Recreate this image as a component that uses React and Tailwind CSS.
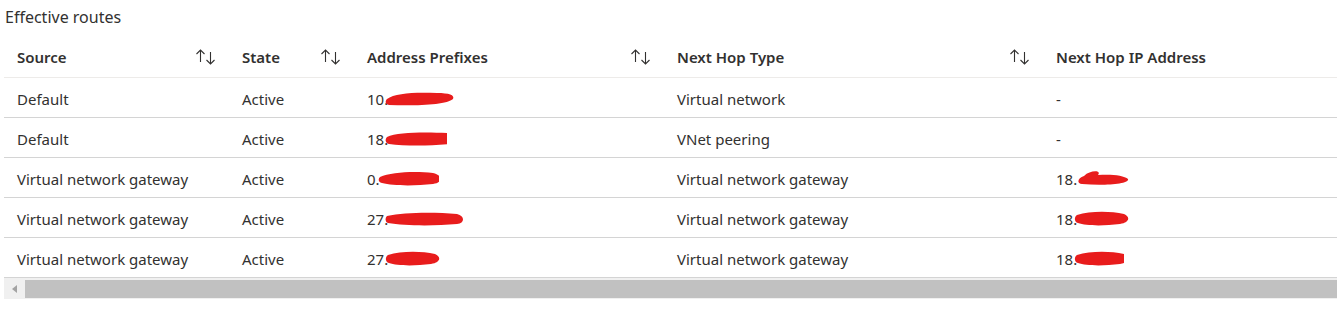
const columns = [
  { label: 'Source', width: 'w-[225px]', sortable: true },
  { label: 'State', width: 'w-[125px]', sortable: true },
  { label: 'Address Prefixes', width: 'w-[310px]', sortable: true },
  { label: 'Next Hop Type', width: 'w-[379px]', sortable: true },
  { label: 'Next Hop IP Address', width: 'flex-1', sortable: false },
]

// scribble shapes covering the redacted part of each address
const scribbles = {
  a: 'M2 8 C10 2, 30 1, 52 2 C64 2, 70 4, 68 8 C62 14, 30 15, 4 14 C0 13, 0 10, 2 8 Z',
  b: 'M2 6 C12 1, 40 1, 62 2 C72 3, 72 11, 64 13 C44 15, 20 15, 4 13 C0 12, 0 8, 2 6 Z',
  c: 'M3 6 C14 1, 38 0, 56 2 C66 4, 66 12, 56 13 C38 15, 16 15, 5 12 C1 11, 1 8, 3 6 Z',
  d: 'M2 5 C20 1, 50 1, 72 3 C80 5, 80 12, 72 13 C50 15, 20 15, 3 12 C0 11, 0 7, 2 5 Z',
  e: 'M10 5 C16 -1, 28 -1, 24 4 C36 3, 50 4, 54 8 C56 13, 30 15, 8 13 C2 12, 4 7, 10 5 Z',
  f: 'M3 4 C16 0, 36 0, 50 3 C57 6, 55 12, 46 13 C30 15, 12 15, 4 12 C0 11, 0 6, 3 4 Z',
}

function Redacted({ prefix, shape, w }) {
  return (
    <span className="inline-flex items-center">
      <span>{prefix}</span>
      <svg width={w} height="16" viewBox={`0 0 ${w} 16`} className="-ml-[3px] -mt-[2px]" preserveAspectRatio="none">
        <path d={scribbles[shape]} fill="#e81c1c" />
      </svg>
    </span>
  )
}

const rows = [
  { source: 'Default', state: 'Active', prefix: <Redacted prefix="10." shape="a" w={70} />, type: 'Virtual network', ip: '-' },
  { source: 'Default', state: 'Active', prefix: <Redacted prefix="18." shape="b" w={62} />, type: 'VNet peering', ip: '-' },
  { source: 'Virtual network gateway', state: 'Active', prefix: <Redacted prefix="0." shape="c" w={62} />, type: 'Virtual network gateway', ip: <Redacted prefix="18." shape="e" w={58} /> },
  { source: 'Virtual network gateway', state: 'Active', prefix: <Redacted prefix="27." shape="d" w={78} />, type: 'Virtual network gateway', ip: <Redacted prefix="18." shape="f" w={56} /> },
  { source: 'Virtual network gateway', state: 'Active', prefix: <Redacted prefix="27." shape="f" w={60} />, type: 'Virtual network gateway', ip: <Redacted prefix="18." shape="f" w={50} /> },
]

function SortIcon() {
  return (
    <svg width="22" height="18" viewBox="0 0 22 18" fill="none" stroke="#323130" strokeWidth="1.1">
      <path d="M5.5 2 V14 M1.5 6 L5.5 2 L9.5 6" />
      <path d="M15.5 4 V16 M11.5 12 L15.5 16 L19.5 12" />
    </svg>
  )
}

export default function App() {
  return (
    <div className="w-[1337px] h-[311px] bg-white text-[#323130] overflow-hidden"
         style={{ fontFamily: '"Noto Sans", "Open Sans", sans-serif' }}>

      {/* Title */}
      <div className="pl-[5px] pt-[5px] h-[37px] text-[16px] leading-[24px]">Effective routes</div>

      <div className="ml-[4px]">
        {/* Header */}
        <div className="flex h-[41px] items-center border-b border-[#edebe9] text-[15px] font-semibold">
          {columns.map((c) => (
            <div key={c.label} className={`${c.width} flex items-center justify-between pr-[12px] pl-[13px]`}>
              <span>{c.label}</span>
              {c.sortable && <SortIcon />}
            </div>
          ))}
        </div>

        {/* Rows */}
        {rows.map((r, i) => (
          <div key={i} className="flex h-[40px] items-center pt-[4px] border-b border-[#d4d4d4] text-[15px]">
            <div className="w-[225px] pl-[13px]">{r.source}</div>
            <div className="w-[125px] pl-[13px]">{r.state}</div>
            <div className="w-[310px] pl-[13px]">{r.prefix}</div>
            <div className="w-[379px] pl-[13px]">{r.type}</div>
            <div className="flex-1 pl-[13px]">{r.ip}</div>
          </div>
        ))}

        {/* Horizontal scrollbar */}
        <div className="flex h-[21px] bg-[#f0f0f0] items-center">
          <div className="w-[21px] h-full flex items-center justify-center">
            <svg width="6" height="8" viewBox="0 0 6 8">
              <path d="M5 0 L0 4 L5 8 Z" fill="#a3a3a3" />
            </svg>
          </div>
          <div className="flex-1 h-[18px] bg-[#c1c1c1]" />
        </div>
      </div>
    </div>
  )
}
